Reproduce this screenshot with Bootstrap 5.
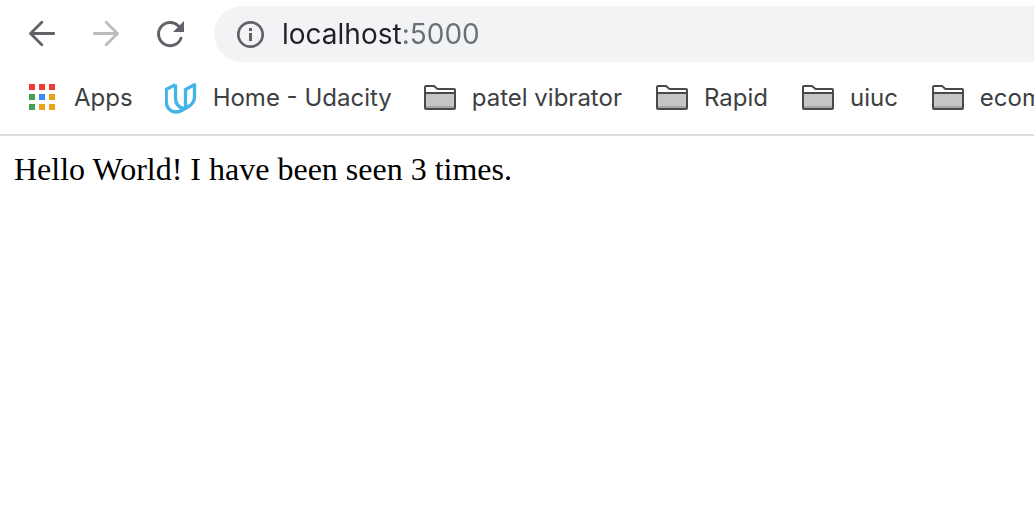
<!DOCTYPE html>
<html lang="en">
<head>
<meta charset="utf-8">
<meta name="viewport" content="width=device-width, initial-scale=1">
<title>localhost:5000</title>
<link href="https://cdn.jsdelivr.net/npm/bootstrap@5.3.0/dist/css/bootstrap.min.css" rel="stylesheet">
<style>
  body { background: #fff; }
  .browser-bar { border-bottom: 2px solid #dadce0; font-family: Inter, "Liberation Sans", sans-serif; }
  .tool-row { padding: 6px 0 0 26px; }
  .tool-buttons { gap: 32px; margin-right: 28px; }
  .tool-buttons button { width: 32px; height: 32px; color: #5f6368; }
  .tool-buttons button:disabled { color: #babcbe; opacity: 1; }
  .omnibox { height: 56px; padding-left: 20px; gap: 16px; background: #f1f3f4; border-radius: 28px 0 0 28px; }
  .address {
    font-size: 28px; line-height: 36px; color: #202124;
    background: linear-gradient(90deg, #202124 120px, #6b6e72 120px);
    -webkit-background-clip: text; background-clip: text;
    -webkit-text-fill-color: transparent;
  }
  .bookmark-row { height: 72px; padding-left: 26px; gap: 32px; }
  .folder-group { gap: 34px; }
  .bookmark { gap: 16px; font-size: 24px; line-height: 32px; color: #3c4043; }
  .page-text { font-family: "Liberation Serif", serif; font-size: 32px; line-height: 36px; padding: 15px 14px; color: #000; }
</style>
</head>
<body>
<svg class="d-none" aria-hidden="true">
  <symbol id="folder" viewBox="0 0 32 32">
    <path d="M2 11h28v15H2z" fill="#c6c6c6"/>
    <path d="M2 25h28" stroke="#a6a6a6" stroke-width="2"/>
    <path d="M1 11h30M1 26V5q0-1 1-1h8l3.500 3H30q1 0 1 1v18q0 1-1 1H2q-1 0-1-1z" fill="none" stroke="#4a4a4a" stroke-width="2" stroke-linejoin="round"/>
  </symbol>
</svg>

<header class="browser-bar overflow-hidden">
  <div class="tool-row d-flex align-items-center">
    <div class="tool-buttons d-flex flex-shrink-0">
      <button type="button" class="btn border-0 p-0 d-flex" aria-label="Back">
        <svg width="32" height="32" viewBox="0 0 32 32" fill="none" stroke="currentColor" stroke-width="2.800" stroke-linecap="round" stroke-linejoin="round"><path d="M27.700 15.500H4.500M15.800 4.200L4.500 15.500l11.300 11.300"/></svg>
      </button>
      <button type="button" class="btn border-0 p-0 d-flex" aria-label="Forward" disabled>
        <svg width="32" height="32" viewBox="0 0 32 32" fill="none" stroke="currentColor" stroke-width="2.800" stroke-linecap="round" stroke-linejoin="round"><path d="M4.300 15.500h23.200M16.200 4.200l11.300 11.300-11.300 11.300"/></svg>
      </button>
      <button type="button" class="btn border-0 p-0 d-flex" aria-label="Reload">
        <svg width="32" height="32" viewBox="0 0 32 32" fill="none"><path d="M27 20.200A11.600 11.600 0 1 1 24.500 8" stroke="currentColor" stroke-width="2.900" stroke-linecap="round"/><path d="M30 3v11H19z" fill="currentColor"/></svg>
      </button>
    </div>
    <div class="omnibox d-flex align-items-center flex-grow-1">
      <svg class="flex-shrink-0" width="32" height="32" viewBox="0 0 32 32"><circle cx="16.500" cy="16.500" r="12.200" fill="none" stroke="#606265" stroke-width="2.700"/><path d="M15 10h3v3h-3zM15 15h3v8h-3z" fill="#606265"/></svg>
      <input type="text" class="address border-0 p-0 w-100" value="localhost:5000" aria-label="Address" spellcheck="false">
    </div>
  </div>

  <nav class="bookmark-row d-flex align-items-center text-nowrap" aria-label="Bookmarks">
    <a href="#" class="bookmark d-flex align-items-center flex-shrink-0 text-decoration-none">
      <svg width="32" height="32" viewBox="0 0 32 32"><path d="M3 2h6v6H3zM13 2h6v6h-6zM23 2h6v6h-6z" fill="#ee3b36"/><path d="M3 12h6v6H3zM3 22h6v6H3z" fill="#469f58"/><path d="M13 12h6v6h-6z" fill="#3b8af3"/><path d="M23 12h6v6h-6zM13 22h6v6h-6zM23 22h6v6h-6z" fill="#e9a31b"/></svg>
      <span>Apps</span>
    </a>
    <a href="#" class="bookmark d-flex align-items-center flex-shrink-0 text-decoration-none">
      <svg width="32" height="32" viewBox="0 0 32 32" fill="none" stroke="#42b4e6" stroke-width="3.300" stroke-linejoin="round"><path d="M10.500 2.600L1.200 7.500V19c0 6.500 4 11 9.800 11 2.500 0 4.500-.8 6.500-2l6-3.500c4-2.400 6-5.300 6-9.500V2.600L20.500 7.500v18M10.500 2.600V16c0 5.500 3 9.500 8.500 10.500"/></svg>
      <span>Home - Udacity</span>
    </a>
    <div class="folder-group d-flex align-items-center flex-shrink-0">
      <a href="#" class="bookmark d-flex align-items-center text-decoration-none"><svg width="32" height="32"><use href="#folder"/></svg><span>patel vibrator</span></a>
      <a href="#" class="bookmark d-flex align-items-center text-decoration-none"><svg width="32" height="32"><use href="#folder"/></svg><span>Rapid</span></a>
      <a href="#" class="bookmark d-flex align-items-center text-decoration-none"><svg width="32" height="32"><use href="#folder"/></svg><span>uiuc</span></a>
      <a href="#" class="bookmark d-flex align-items-center text-decoration-none"><svg width="32" height="32"><use href="#folder"/></svg><span>ecom</span></a>
    </div>
  </nav>
</header>

<main class="page-text">Hello World! I have been seen 3 times.</main>
<script src="https://cdn.jsdelivr.net/npm/bootstrap@5.3.0/dist/js/bootstrap.bundle.min.js"></script>
</body>
</html>
